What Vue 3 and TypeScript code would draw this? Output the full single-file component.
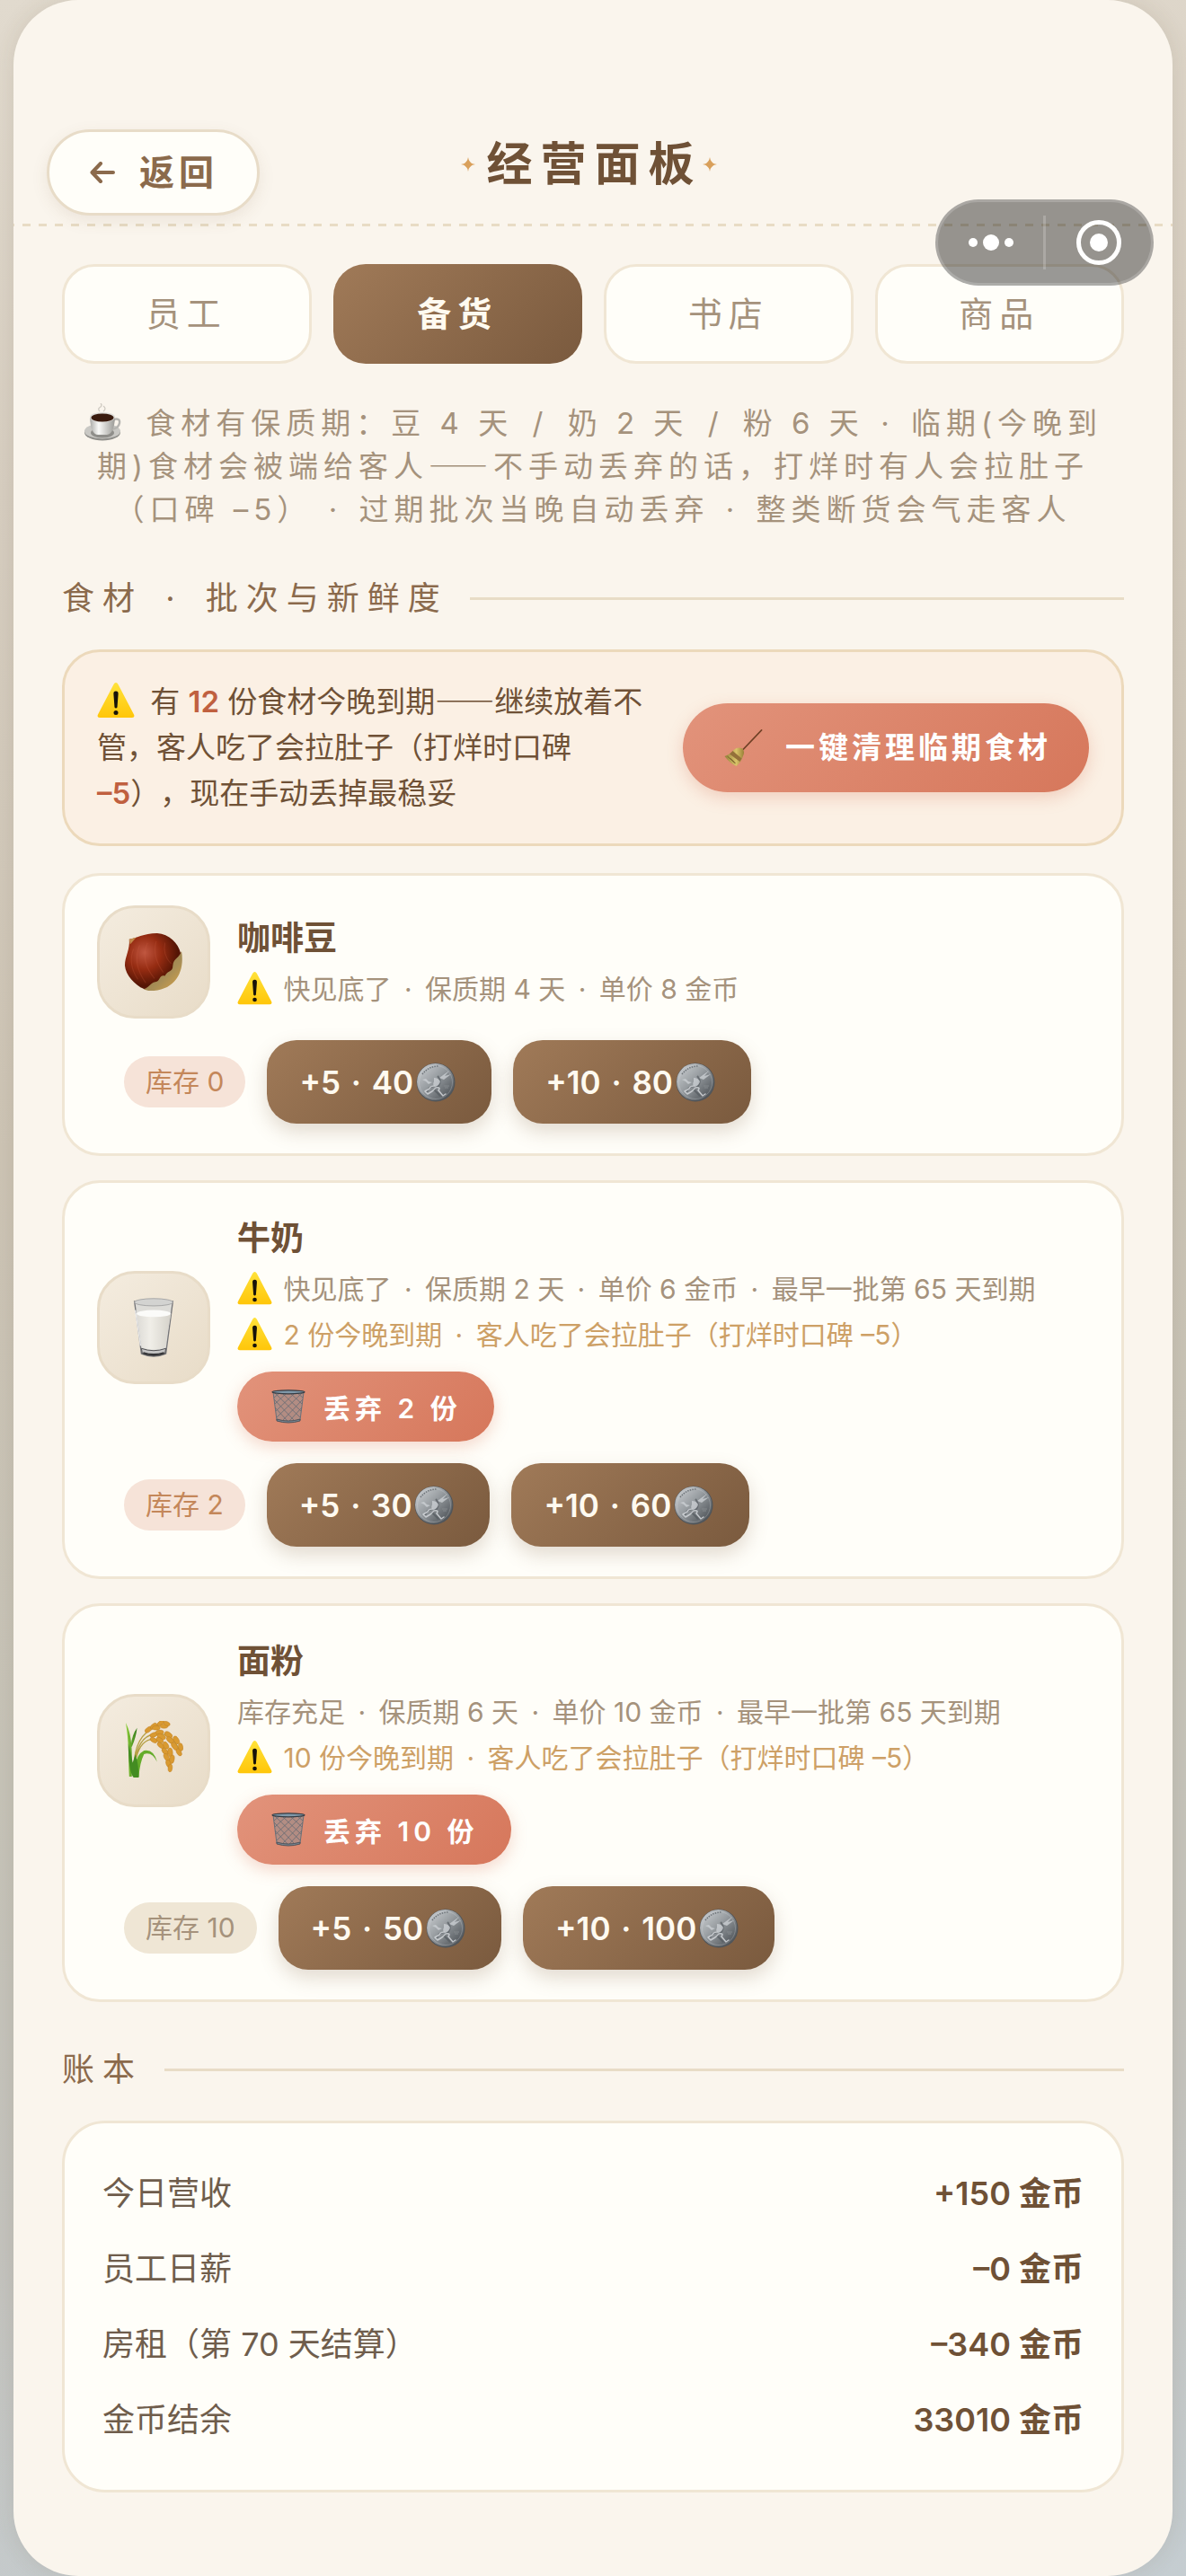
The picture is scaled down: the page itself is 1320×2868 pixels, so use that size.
<script setup lang="ts">
import { ref } from 'vue'

interface Ingredient {
  name: string
  icon: string
  low: boolean
  info: string[]
  expiring: number
  stock: number
  offers: { qty: number; cost: number }[]
}

const tabs = ['员工', '备货', '书店', '商品']
const active = ref('备货')

const ingredients: Ingredient[] = [
  {
    name: '咖啡豆',
    icon: 'chestnut',
    low: true,
    info: ['快见底了', '保质期 4 天', '单价 8 金币'],
    expiring: 0,
    stock: 0,
    offers: [{ qty: 5, cost: 40 }, { qty: 10, cost: 80 }],
  },
  {
    name: '牛奶',
    icon: 'milk',
    low: true,
    info: ['快见底了', '保质期 2 天', '单价 6 金币', '最早一批第 65 天到期'],
    expiring: 2,
    stock: 2,
    offers: [{ qty: 5, cost: 30 }, { qty: 10, cost: 60 }],
  },
  {
    name: '面粉',
    icon: 'rice',
    low: false,
    info: ['库存充足', '保质期 6 天', '单价 10 金币', '最早一批第 65 天到期'],
    expiring: 10,
    stock: 10,
    offers: [{ qty: 5, cost: 50 }, { qty: 10, cost: 100 }],
  },
]

const ledger = [
  { label: '今日营收', value: '+150 金币' },
  { label: '员工日薪', value: '–0 金币' },
  { label: '房租（第 70 天结算）', value: '–340 金币' },
  { label: '金币结余', value: '33010 金币' },
]
</script>

<template>
  <div class="page" lang="zh-CN">
    <svg class="sprite" width="0" height="0" aria-hidden="true">
      <defs>
        <linearGradient id="g-warn" x1="0" y1="0" x2="0" y2="1">
          <stop offset="0" stop-color="#ffe23a" /><stop offset="1" stop-color="#ffc60a" />
        </linearGradient>
        <linearGradient id="g-coin" x1="0" y1="0" x2="1" y2="1">
          <stop offset="0" stop-color="#d3d6d9" /><stop offset=".45" stop-color="#989da1" /><stop offset="1" stop-color="#3f4449" />
        </linearGradient>
        <radialGradient id="g-nut" cx=".35" cy=".35" r=".75">
          <stop offset="0" stop-color="#bf5640" /><stop offset=".4" stop-color="#962c12" /><stop offset=".8" stop-color="#521404" /><stop offset="1" stop-color="#6b1c18" />
        </radialGradient>
        <linearGradient id="g-husk" x1="0" y1="0" x2="1" y2="1">
          <stop offset="0" stop-color="#8b7040" /><stop offset=".6" stop-color="#a68d56" /><stop offset="1" stop-color="#dba548" />
        </linearGradient>
        <linearGradient id="g-milk" x1="0" y1="0" x2="1" y2="0">
          <stop offset="0" stop-color="#dcdad5" /><stop offset=".4" stop-color="#f0eee8" /><stop offset="1" stop-color="#d5d2ca" />
        </linearGradient>
        <linearGradient id="g-stem" x1="0" y1="0" x2="1" y2="0">
          <stop offset="0" stop-color="#8fd038" /><stop offset="1" stop-color="#347c1d" />
        </linearGradient>
        <linearGradient id="g-cup" x1="0" y1="0" x2="1" y2="0">
          <stop offset="0" stop-color="#a9a9a6" /><stop offset=".35" stop-color="#fafaf8" /><stop offset="1" stop-color="#9b9a96" />
        </linearGradient>
        <linearGradient id="g-broom" x1="0" y1="0" x2="1" y2="0">
          <stop offset="0" stop-color="#94803a" /><stop offset=".6" stop-color="#d9c46a" /><stop offset="1" stop-color="#9a8038" />
        </linearGradient>
      </defs>
      <symbol id="warn" viewBox="0 0 42 42">
        <path d="M21 1Q22.500 1 23.500 3L41 36.500Q42.500 40 39 40H3Q-.5 40 1 36.500L18.500 3Q19.500 1 21 1Z" fill="url(#g-warn)" />
        <path d="M21 10.500C23.300 10.500 23.800 12 23.600 14L22.500 28.500Q21 30.500 19.500 28.500L18.400 14C18.200 12 18.700 10.500 21 10.500Z" fill="#17130a" />
        <circle cx="21" cy="34.500" r="2.500" fill="#17130a" />
      </symbol>
      <symbol id="coin" viewBox="0 0 44 44">
        <circle cx="22" cy="22" r="21.500" fill="#50555a" />
        <circle cx="21.700" cy="21.500" r="20.600" fill="url(#g-coin)" />
        <circle cx="22" cy="22" r="18.500" fill="none" stroke="#dfe3e6" stroke-opacity=".3" stroke-width=".8" />
        <path d="M7 13Q14 4 25 4" fill="none" stroke="#6f757a" stroke-width="1.600" stroke-dasharray="1.500 1.200" />
        <path d="M24 15Q29 20 25 26L20 30L27 37M20 26Q14 27 12 33" fill="none" stroke="#555b61" stroke-opacity=".7" stroke-width="2" />
        <path d="M20 17Q25 17 27 21Q26 26 21 27Q18 25 20 21ZM26 17L37 9L32 15L39 13L31 19ZM7 19L11 18L14 21L18 22L14 24L11 21Z" fill="#cfd3d7" fill-opacity=".75" />
        <path d="M20 26Q16 26 15 29L10 32L13 35L18 32L22 28Q28 27 25 31L30 37L33 35" fill="none" stroke="#d3d7da" stroke-opacity=".85" stroke-width="1.500" stroke-linecap="round" stroke-linejoin="round" />
        <path d="M31 26H37M32 28H36" stroke="#85898d" stroke-width="1" />
      </symbol>
      <symbol id="chestnut" viewBox="0 0 68 68">
        <path d="M66 22C70 46 58 68 28 67Q22 66 22 64L56 32Z" fill="url(#g-husk)" />
        <path d="M6 8C14 7 22 1 38 1C52 2 62 12 65 24C61 31 57 30 56 38C56 46 50 43 47 50C40 48 42 56 36 57C30 58 28 64 23 65C12 60 2 49 1 38C1 28 7 20 6 8Z" fill="url(#g-nut)" />
        <path d="M6 8L14 6L7 14Z" fill="#c18a4b" />
        <path d="M11 19Q4 36 16 54M18 15Q9 36 25 58M27 12Q18 32 35 53M37 10Q32 28 45 46M47 12Q44 26 54 36" fill="none" stroke="#d76a4c" stroke-opacity=".2" stroke-width="1.200" />
      </symbol>
      <symbol id="milk" viewBox="0 0 68 68">
        <path d="M12 4L20 64Q34 70 48 64L56 4Z" fill="#dddcd8" stroke="#77777a" stroke-width="1.400" />
        <path d="M14 18Q34 12 54 18L47 57Q34 62 21 57Z" fill="url(#g-milk)" />
        <ellipse cx="34" cy="18" rx="19.500" ry="4" fill="#fbfbf9" />
        <ellipse cx="34" cy="5" rx="22" ry="4.200" fill="#d3d3d1" stroke="#a5a5a5" stroke-width="1" />
        <path d="M20 58Q34 63 48 58L47 64Q34 69 21 64Z" fill="#c4c4c4" stroke="#4c4c4e" stroke-width="1" />
        <path d="M22 63Q34 67 46 63" fill="none" stroke="#343436" stroke-width="2.200" />
        <path d="M13 14L19 55" stroke="#fff" stroke-opacity=".8" stroke-width="1.500" />
      </symbol>
      <symbol id="rice" viewBox="0 0 68 68">
        <path d="M6 64C5 45 6 24 2 2C8 14 10 26 9 64ZM8 28Q9 16 15 8Q14 18 9 30Z" fill="url(#g-stem)" />
        <path d="M12 44Q15 12 43 4M13 43Q19 12 43 15Q57 16 65 37M14 42Q20 20 35 21Q48 26 53 52" fill="none" stroke="#b6a045" stroke-width="1.400" />
        <path d="M12 64H17Q18 48 23 38Q32 35 38 47Q34 32 23 34Q15 38 12 52Z" fill="#65ac2a" />
        <path d="M5 26Q5 58 11 65H17Q17 50 13 38L10 48Q8 36 5 26Z" fill="#438c22" />
        <g fill="#d99a31" stroke="#bf7f24" stroke-width=".5">
          <ellipse cx="28" cy="10" rx="4.500" ry="2.600" transform="rotate(-35 28 10)" /><ellipse cx="34" cy="6" rx="4.500" ry="2.600" transform="rotate(-40 34 6)" /><ellipse cx="37" cy="8" rx="4.500" ry="2.400" /><ellipse cx="42" cy="2.500" rx="4.500" ry="2.400" transform="rotate(-35 42 2.500)" /><ellipse cx="46" cy="6" rx="4.500" ry="2.400" /><ellipse cx="49" cy="3" rx="4" ry="2.300" transform="rotate(25 49 3)" />
          <ellipse cx="34" cy="16" rx="4.500" ry="2.600" transform="rotate(-20 34 16)" /><ellipse cx="41" cy="13" rx="4.500" ry="2.600" /><ellipse cx="43" cy="18" rx="5" ry="2.800" transform="rotate(20 43 18)" /><ellipse cx="51" cy="16" rx="5" ry="3" transform="rotate(35 51 16)" /><ellipse cx="53" cy="22" rx="5" ry="2.800" transform="rotate(40 53 22)" /><ellipse cx="60" cy="22" rx="5" ry="2.800" transform="rotate(60 60 22)" /><ellipse cx="58" cy="29" rx="5" ry="2.800" transform="rotate(55 58 29)" /><ellipse cx="65" cy="30" rx="4.500" ry="2.600" transform="rotate(80 65 30)" /><ellipse cx="63" cy="36" rx="4.500" ry="2.500" transform="rotate(60 63 36)" />
          <ellipse cx="34" cy="22" rx="4.500" ry="2.500" transform="rotate(30 34 22)" /><ellipse cx="41" cy="22" rx="4.500" ry="2.600" transform="rotate(30 41 22)" /><ellipse cx="42" cy="28" rx="4.500" ry="2.500" transform="rotate(40 42 28)" /><ellipse cx="48" cy="28" rx="4.500" ry="2.700" transform="rotate(60 48 28)" /><ellipse cx="47" cy="35" rx="4.500" ry="2.700" transform="rotate(50 47 35)" /><ellipse cx="53" cy="36" rx="5" ry="2.800" transform="rotate(85 53 36)" /><ellipse cx="49" cy="42" rx="5" ry="2.700" transform="rotate(60 49 42)" /><ellipse cx="55" cy="44" rx="5" ry="2.700" transform="rotate(100 55 44)" /><ellipse cx="51" cy="49" rx="4.500" ry="2.700" transform="rotate(70 51 49)" /><ellipse cx="53" cy="54" rx="4.500" ry="2.400" transform="rotate(95 53 54)" />
        </g>
      </symbol>
      <symbol id="cup" viewBox="0 0 42 42">
        <path d="M18 9Q15 6 19 4Q21 2 19 0M22 9Q26 6 22 3" fill="none" stroke="#cfcac2" stroke-width="1.300" />
        <ellipse cx="21" cy="32.500" rx="20" ry="9" fill="#8f8e8a" />
        <ellipse cx="21" cy="31" rx="20" ry="8.500" fill="#c9c8c4" />
        <ellipse cx="21" cy="33" rx="13" ry="5.500" fill="#8f8e8a" />
        <path d="M33 18Q41 16 40 22Q39 28 31 29" fill="none" stroke="#b6b5b1" stroke-width="2.400" />
        <path d="M7 16Q8 35 16 35H26Q34 34 35 16Z" fill="url(#g-cup)" />
        <ellipse cx="21" cy="15.500" rx="14" ry="5.500" fill="#dddcd8" />
        <ellipse cx="21" cy="16" rx="12.500" ry="4.500" fill="#3a1b0e" />
      </symbol>
      <symbol id="broom" viewBox="0 0 42 42">
        <path d="M41 1L21 22" stroke="#6f4025" stroke-width="1.800" stroke-linecap="round" />
        <path d="M10 23Q15 19 20 21.500Q23 25 20 31Q18 37 13 41Q6 38 0 30Q6 28 10 23Z" fill="url(#g-broom)" />
        <path d="M9 24L19 32.500L17 36L5.500 27.500Z" fill="#94703a" />
        <path d="M3 30L11 37M6 32L12 38" fill="none" stroke="#77602a" stroke-width="1" />
      </symbol>
      <symbol id="bin" viewBox="0 0 38 38">
        <path d="M2 3L6 34Q19 38 32 34L36 3Z" fill="#a08d8a" fill-opacity=".7" stroke="#687078" stroke-width="1" />
        <path d="M3 11L26 35M4 4L32 31M12 4L33 24M21 4L34 16M29 4L35 9M35 11L12 35M34 4L6 31M26 4L5 24M17 4L4 16M9 4L3 9M4 20L18 35M34 20L20 35" fill="none" stroke="#656b73" stroke-width=".8" />
        <path d="M6 33Q19 37 32 33V35Q19 39 6 35Z" fill="#76838e" stroke="#434950" stroke-width=".8" />
        <ellipse cx="19" cy="2.800" rx="18" ry="2" fill="#7f98a9" stroke="#363c43" stroke-width="1.200" />
      </symbol>
    </svg>

    <div class="capsule">
      <button type="button" aria-label="更多">
        <svg width="50" height="18" viewBox="0 0 50 18" fill="#fff"><circle cx="5" cy="9" r="5" /><circle cx="25" cy="9" r="9" /><circle cx="45" cy="9" r="5" /></svg>
      </button>
      <span class="split"></span>
      <button type="button" aria-label="关闭">
        <svg width="50" height="50" viewBox="0 0 50 50"><circle cx="25" cy="25" r="22.500" fill="none" stroke="#fff" stroke-width="5" /><circle cx="25" cy="25" r="10" fill="#fff" /></svg>
      </button>
    </div>

    <main class="panel">
      <header class="head">
        <button class="back" type="button">
          <svg width="28" height="24" viewBox="0 0 28 24" fill="none" stroke="currentColor" stroke-width="4" stroke-linecap="round" stroke-linejoin="round"><path d="M12 2L2.500 12L12 22M3 12H26" /></svg>
          <span>返回</span>
        </button>
        <h1>
          <svg class="spark" viewBox="0 0 16 16"><path d="M8 0Q8.800 7.200 16 8Q8.800 8.800 8 16Q7.200 8.800 0 8Q7.200 7.200 8 0Z" /><circle cx="8" cy="8" r="3.300" /></svg>
          <span>经营面板</span>
          <svg class="spark" viewBox="0 0 16 16"><path d="M8 0Q8.800 7.200 16 8Q8.800 8.800 8 16Q7.200 8.800 0 8Q7.200 7.200 8 0Z" /><circle cx="8" cy="8" r="3.300" /></svg>
        </h1>
      </header>

      <div class="body">
        <nav class="tabs" role="tablist">
          <button v-for="t in tabs" :key="t" type="button" role="tab" :aria-selected="active === t" :class="{ on: active === t }" @click="active = t">{{ t }}</button>
        </nav>

        <p class="hint">
          <svg class="emoji"><use href="#cup" /></svg> 食材有保质期：豆 4 天 <i class="slash">/</i> 奶 2 天 <i class="slash">/</i> 粉 6 天 <i class="dot">·</i> 临期(今晚到<br />期)食材会被端给客人<span class="dash">——</span>不手动丢弃的话，打烊时有人会拉肚子<br />（口碑 –5） <i class="dot">·</i> 过期批次当晚自动丢弃 <i class="dot">·</i> 整类断货会气走客人
        </p>

        <h2><span>食材 <i class="dot">·</i> 批次与新鲜度</span></h2>

        <section class="alert">
          <p><svg class="emoji"><use href="#warn" /></svg> 有 <b>12</b> 份食材今晚到期<span class="dash">——</span>继续放着不<br />管，客人吃了会拉肚子（打烊时口碑<br /><b>–5</b>），现在手动丢掉最稳妥</p>
          <button class="danger big" type="button"><svg class="emoji"><use href="#broom" /></svg>一键清理临期食材</button>
        </section>

        <div class="list">
          <article v-for="item in ingredients" :key="item.name" class="card">
            <div class="top">
              <div class="icon"><svg><use :href="'#' + item.icon" /></svg></div>
              <div class="detail">
                <h3>{{ item.name }}</h3>
                <p>
                  <template v-if="item.low"><svg class="emoji"><use href="#warn" /></svg>&nbsp;</template>
                  <template v-for="(part, i) in item.info" :key="part"><template v-if="i > 0">&nbsp;<i class="dot">·</i>&nbsp;</template>{{ part }}</template>
                </p>
                <template v-if="item.expiring">
                  <p class="soon"><svg class="emoji"><use href="#warn" /></svg>&nbsp;{{ item.expiring }} 份今晚到期 <i class="dot">·</i> 客人吃了会拉肚子（打烊时口碑 –5）</p>
                  <button class="danger" type="button"><svg class="emoji"><use href="#bin" /></svg>丢弃 {{ item.expiring }} 份</button>
                </template>
              </div>
            </div>
            <div class="actions">
              <span class="stock" :class="{ low: item.low }">库存 {{ item.stock }}</span>
              <button v-for="o in item.offers" :key="o.qty" class="buy" type="button"><span>+{{ o.qty }} <i class="dot">·</i> {{ o.cost }}</span><svg><use href="#coin" /></svg></button>
            </div>
          </article>
        </div>

        <h2>账本</h2>

        <dl class="ledger">
          <div v-for="row in ledger" :key="row.label">
            <dt>{{ row.label }}</dt>
            <dd>{{ row.value }}</dd>
          </div>
        </dl>
      </div>
    </main>
  </div>
</template>

<style>
body {
  margin: 0;
}
</style>

<style scoped>
.page {
  position: relative;
  box-sizing: border-box;
  min-height: 100vh;
  display: flex;
  padding: 0 15px;
  background: linear-gradient(172deg, #e1dace 0%, #d7cec1 18%, #cdc4b5 42%, #c6c3b8 65%, #c4c3be 82%, #c5cdd1 100%);
  font-family: Inter, "Noto Sans CJK SC", sans-serif;
  text-spacing-trim: space-all;
  color: #6f5136;
}
.sprite {
  position: absolute;
}
button {
  font: inherit;
  border: 0;
  margin: 0;
  cursor: pointer;
}
h1, h2, h3, p, dl, dd {
  margin: 0;
}
i {
  font-style: normal;
}
.dot,
.slash {
  margin: 0 6px;
}
.hint .dot,
.buy .dot {
  margin: 0 3px;
}
.dash {
  font-family: "Noto Sans CJK SC", sans-serif;
  line-height: 1;
}
.panel {
  flex: 1;
  min-width: 0;
  border-radius: 72px;
  background: #faf5ed;
  box-shadow: 0 0 24px rgba(90, 70, 45, 0.12);
}
.head {
  display: grid;
  grid-template-columns: 1fr auto 1fr;
  align-items: start;
  padding: 144px 37px 12px;
  background: repeating-linear-gradient(90deg, #e8dcc5 0 1px, transparent 1px 10px, #e8dcc5 10px 18px) 0 100% / 100% 3px no-repeat;
}
.back {
  justify-self: start;
  display: flex;
  align-items: center;
  gap: 27px;
  box-sizing: border-box;
  height: 96px;
  padding: 0 43px 0 45px;
  border: 3px solid #e8dcc8;
  border-radius: 48px;
  background: #fffef9;
  box-shadow: 0 6px 18px rgba(120, 90, 60, 0.1);
  color: #8b6a4c;
  font-size: 39px;
  line-height: 54px;
  font-weight: 600;
  letter-spacing: 5px;
}
h1 {
  display: flex;
  align-items: center;
  gap: 12px;
  padding-right: 9px;
  font-size: 51px;
  line-height: 78px;
  font-weight: 600;
  letter-spacing: 9px;
}
.spark {
  width: 16px;
  height: 16px;
  fill: #d9a05b;
}
.spark:last-child {
  margin-left: -12px;
}
.body {
  padding: 42px 54px 93px;
}
.tabs {
  display: grid;
  grid-template-columns: repeat(4, 1fr);
  gap: 24px;
}
.tabs button {
  height: 111px;
  padding: 0 0 6px;
  border: 3px solid #f0e6d4;
  border-radius: 36px;
  background: #fffef9;
  color: #a5927c;
  font-size: 38px;
  letter-spacing: 7px;
}
.tabs .on {
  border-color: transparent;
  background: linear-gradient(135deg, #a07a58, #7a5a3e) border-box;
  color: #fffaf0;
  font-weight: 600;
}
.hint {
  margin-top: 42px;
  color: #a5927c;
  font-size: 33px;
  line-height: 48px;
  letter-spacing: 6px;
  text-align: center;
  white-space: nowrap;
}
.emoji {
  width: 42px;
  height: 42px;
  margin: -6px 4px -6px 0;
  vertical-align: -2px;
}
.hint .emoji {
  margin-right: 12px;
}
h2 {
  display: flex;
  align-items: center;
  gap: 24px;
  margin: 45px 0 27px;
  color: #8b6a4c;
  font-size: 36px;
  line-height: 60px;
  font-weight: 400;
  letter-spacing: 9px;
}
h2::after {
  content: "";
  flex: 1;
  height: 3px;
  background: #e8dcc6;
}
.alert {
  display: flex;
  align-items: center;
  justify-content: space-between;
  padding: 30px 36px;
  border: 3px solid #ecd9bb;
  border-radius: 42px;
  background: #fbf0e4;
  font-size: 33px;
  line-height: 51px;
}
.alert p {
  white-space: nowrap;
}
.alert p .emoji {
  margin-right: 8px;
}
.alert b {
  font-weight: 600;
  color: #c0603f;
}
.danger {
  display: inline-flex;
  align-items: center;
  gap: 18px;
  height: 78px;
  padding: 0 36px;
  border-radius: 39px;
  background: linear-gradient(135deg, #e2937b, #d6775b);
  box-shadow: 0 6px 18px rgba(214, 119, 91, 0.28);
  color: #fff;
  font-size: 30px;
  font-weight: 600;
  letter-spacing: 5px;
  white-space: nowrap;
}
.danger .emoji {
  width: 42px;
  height: 38px;
  margin: 0;
}
.danger.big {
  gap: 24px;
  height: 99px;
  padding: 0 42px 0 45px;
  border-radius: 50px;
  font-size: 33px;
  letter-spacing: 4px;
}
.danger.big .emoji {
  width: 45px;
  height: 42px;
}
.list {
  display: grid;
  gap: 27px;
  margin-top: 30px;
}
.card {
  padding: 33px 36px;
  border: 3px solid #f0e6d4;
  border-radius: 42px;
  background: #fffef9;
}
.top {
  display: flex;
  align-items: center;
  gap: 30px;
}
.icon {
  flex: none;
  display: grid;
  place-items: center;
  box-sizing: border-box;
  width: 126px;
  height: 126px;
  border: 3px solid #e8dcc8;
  border-radius: 42px;
  background: linear-gradient(135deg, #f4ecdf, #e8dcc8);
}
.icon svg {
  width: 66px;
  height: 66px;
}
h3 {
  margin-bottom: 3px;
  font-size: 37px;
  line-height: 57px;
  font-weight: 600;
}
.detail {
  display: flex;
  flex-direction: column;
  align-items: flex-start;
}
.detail p {
  color: #a5927c;
  font-size: 30px;
  line-height: 51px;
  white-space: nowrap;
}
.detail .soon {
  color: #cda066;
}
.detail p .emoji {
  width: 39px;
  height: 39px;
}
.detail .danger {
  margin-top: 15px;
}
.actions {
  display: flex;
  align-items: center;
  gap: 24px;
  margin: 24px 0 0 30px;
}
.stock {
  padding: 0 24px;
  border-radius: 29px;
  background: #efe6d5;
  color: #a5927c;
  font-size: 30px;
  line-height: 57px;
}
.stock.low {
  background: #f6e3d8;
  color: #c4875a;
}
.buy {
  display: flex;
  align-items: center;
  gap: 3px;
  height: 93px;
  padding: 0 40px 0 36px;
  border-radius: 33px;
  background: linear-gradient(135deg, #a07a58, #7a5a3e);
  box-shadow: 0 9px 21px rgba(122, 90, 62, 0.22);
  color: #fffaf0;
  font-size: 35px;
  font-weight: 600;
}
.buy svg {
  width: 44px;
  height: 44px;
}
.ledger {
  padding: 36px 42px;
  border: 3px solid #f0e6d4;
  border-radius: 48px;
  background: #fffef9;
  font-size: 36px;
  line-height: 84px;
}
.ledger div {
  display: flex;
  justify-content: space-between;
}
.ledger dt {
  color: #6f5d4c;
}
.ledger dd {
  font-weight: 600;
}
.capsule {
  position: absolute;
  top: 222px;
  right: 36px;
  z-index: 2;
  box-sizing: border-box;
  display: flex;
  align-items: center;
  width: 243px;
  height: 96px;
  border: 3px solid rgba(255, 255, 255, 0.18);
  border-radius: 48px;
  background: rgba(0, 0, 0, 0.4);
}
.capsule button {
  flex: 1;
  display: flex;
  align-items: center;
  justify-content: center;
  height: 90px;
  padding: 0;
  background: none;
}
.split {
  width: 3px;
  height: 60px;
  background: rgba(255, 255, 255, 0.2);
}
</style>
